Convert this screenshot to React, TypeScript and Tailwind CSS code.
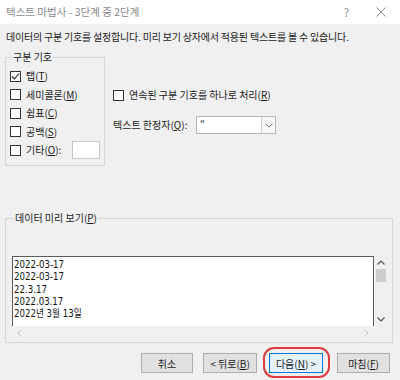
import React from "react";

const ui = { fontFamily: '"Noto Sans CJK KR", "Noto Sans", sans-serif' };
const narrow = { fontFamily: '"DejaVu Sans", "Noto Sans CJK KR", sans-serif' };

function Check({ checked, label, mn }: { checked?: boolean; label: string; mn: string }) {
  return (
    <div className="flex items-center h-[18.5px]">
      <div className="w-[11px] h-[11px] border border-[#333] bg-white flex items-center justify-center shrink-0">
        {checked && (
          <svg width="9" height="9" viewBox="0 0 9 9">
            <path d="M1 4.5 L3.5 7 L8 1.5" fill="none" stroke="#222" strokeWidth="1.1" />
          </svg>
        )}
      </div>
      <span className="ml-[5px] text-[10px] leading-[14px] text-[#1a1a1a]">
        {label}(<span className="underline">{mn}</span>)
      </span>
    </div>
  );
}

function Btn({ children, focus, className }: { children: React.ReactNode; focus?: boolean; className?: string }) {
  return (
    <div
      className={
        "h-[20px] flex items-center justify-center text-[10px] text-[#1a1a1a] border " +
        (focus ? "border-[#0078d7] bg-[#e5f1fb]" : "border-[#adadad] bg-[#e1e1e1]") +
        " " +
        (className ?? "")
      }
    >
      {children}
    </div>
  );
}

export default function App() {
  return (
    <div className="w-[400px] h-[380px] bg-[#f0f0f0] overflow-hidden relative" style={ui}>
      {/* Title bar */}
      <div className="h-[24px] bg-white flex items-center pl-[6px] pr-[14px]">
        <span className="text-[10.5px] text-[#8a8a8a]">텍스트 마법사 - 3단계 중 2단계</span>
        <span className="ml-auto text-[11px] text-[#8a8a8a] mr-[27px]">?</span>
        <svg width="10" height="10" viewBox="0 0 10 10">
          <path d="M0.5 0.5 L9.5 9.5 M9.5 0.5 L0.5 9.5" stroke="#8a8a8a" strokeWidth="1" />
        </svg>
      </div>

      <div className="px-[5px]">
        <div className="mt-[6px] pl-[1px] text-[10px] leading-[14px] text-[#1a1a1a] tracking-[-0.2px]">
          데이터의 구분 기호를 설정합니다. 미리 보기 상자에서 적용된 텍스트를 볼 수 있습니다.
        </div>

        <div className="flex mt-[6px]">
          <fieldset className="w-[100px] h-[116px] border border-[#d5d5d5] px-[4px] pt-[3px]">
            <legend className="ml-[2px] px-[1px] text-[10px] leading-[14px] text-[#1a1a1a]">구분 기호</legend>
            <Check checked label="탭" mn="T" />
            <Check label="세미콜론" mn="M" />
            <Check label="쉼표" mn="C" />
            <Check label="공백" mn="S" />
            <div className="flex items-center h-[18.5px]">
              <div className="w-[11px] h-[11px] border border-[#333] bg-white shrink-0" />
              <span className="ml-[5px] text-[10px] leading-[14px] text-[#1a1a1a]">
                기타(<span className="underline">O</span>):
              </span>
              <div className="ml-auto w-[28px] h-[18px] bg-white border border-[#c8c8c8]" />
            </div>
          </fieldset>

          <div className="ml-[8px] pt-[38px]">
            <div className="flex items-center h-[14px]">
              <div className="w-[11px] h-[11px] border border-[#333] bg-white shrink-0" />
              <span className="ml-[5px] text-[10px] leading-[14px] text-[#1a1a1a]">
                연속된 구분 기호를 하나로 처리(<span className="underline">R</span>)
              </span>
            </div>
            <div className="flex items-center mt-[14px]">
              <span className="text-[10px] leading-[14px] text-[#1a1a1a] w-[83px]">
                텍스트 한정자(<span className="underline">Q</span>):
              </span>
              <div className="w-[80px] h-[18px] bg-white border border-[#b5b5b5] flex">
                <div className="flex-1 pl-[3px] text-[10px] leading-[14px] text-[#1a1a1a]">"</div>
                <div className="w-[14px] border-l border-[#d0d0d0] bg-[#f7f7f7] flex items-center justify-center">
                  <svg width="8" height="5" viewBox="0 0 8 5">
                    <path d="M0.5 0.5 L4 4 L7.5 0.5" fill="none" stroke="#777" strokeWidth="1" />
                  </svg>
                </div>
              </div>
            </div>
          </div>
        </div>

        <fieldset className="mt-[45px] w-[388px] h-[132px] border border-[#d5d5d5] pl-[6px] pt-[31px]">
          <legend className="ml-[2px] px-[1px] text-[10px] leading-[14px] text-[#1a1a1a]">
            데이터 미리 보기(<span className="underline">P</span>)
          </legend>
          <div className="w-[376px] h-[84px] flex flex-col">
            <div className="flex h-[70px]">
              <div className="flex-1 bg-white border-t border-l border-r border-[#5a5a5a] pl-[1px] pt-[1px] overflow-hidden">
                <div className="origin-left scale-x-[0.82]" style={narrow}>
                  {["2022-03-17", "2022-03-17", "22.3.17", "2022.03.17", "2022년 3월 13일"].map((t, i) => (
                    <div key={i} className="text-[10.5px] leading-[12.3px] text-[#111] whitespace-nowrap">{t}</div>
                  ))}
                </div>
              </div>
              <div className="w-[14px] flex flex-col items-center">
                <svg className="mt-[4px]" width="8" height="5" viewBox="0 0 8 5">
                  <path d="M0.5 4.5 L4 1 L7.5 4.5" fill="none" stroke="#555" strokeWidth="1.2" />
                </svg>
                <div className="mt-[4px] w-[10px] h-[13px] bg-[#cdcdcd]" />
                <svg className="mt-auto mb-[4px]" width="8" height="5" viewBox="0 0 8 5">
                  <path d="M0.5 0.5 L4 4 L7.5 0.5" fill="none" stroke="#555" strokeWidth="1.2" />
                </svg>
              </div>
            </div>
            <div className="h-[14px] flex items-center pl-[5px] pr-[19px]">
              <svg width="5" height="8" viewBox="0 0 5 8">
                <path d="M4.5 0.5 L1 4 L4.5 7.5" fill="none" stroke="#c4c4c4" strokeWidth="1" />
              </svg>
              <svg className="ml-auto" width="5" height="8" viewBox="0 0 5 8">
                <path d="M0.5 0.5 L4 4 L0.5 7.5" fill="none" stroke="#c4c4c4" strokeWidth="1" />
              </svg>
            </div>
          </div>
        </fieldset>
      </div>

      <div className="flex mt-[10px] pl-[141px]">
        <Btn className="w-[52px]">취소</Btn>
        <Btn className="w-[54px] ml-[10px]">
          &lt; 뒤로(<span className="underline">B</span>)
        </Btn>
        <div className="relative ml-[12px]">
          <Btn focus className="w-[54px]">
            다음(<span className="underline">N</span>) &gt;
          </Btn>
          <div className="absolute -left-[6px] -right-[7px] -top-[6px] -bottom-[5px] rounded-[11px] border-2 border-[#de3a3f]" />
        </div>
        <Btn className="w-[53px] ml-[14px]">
          마침(<span className="underline">F</span>)
        </Btn>
      </div>
    </div>
  );
}
